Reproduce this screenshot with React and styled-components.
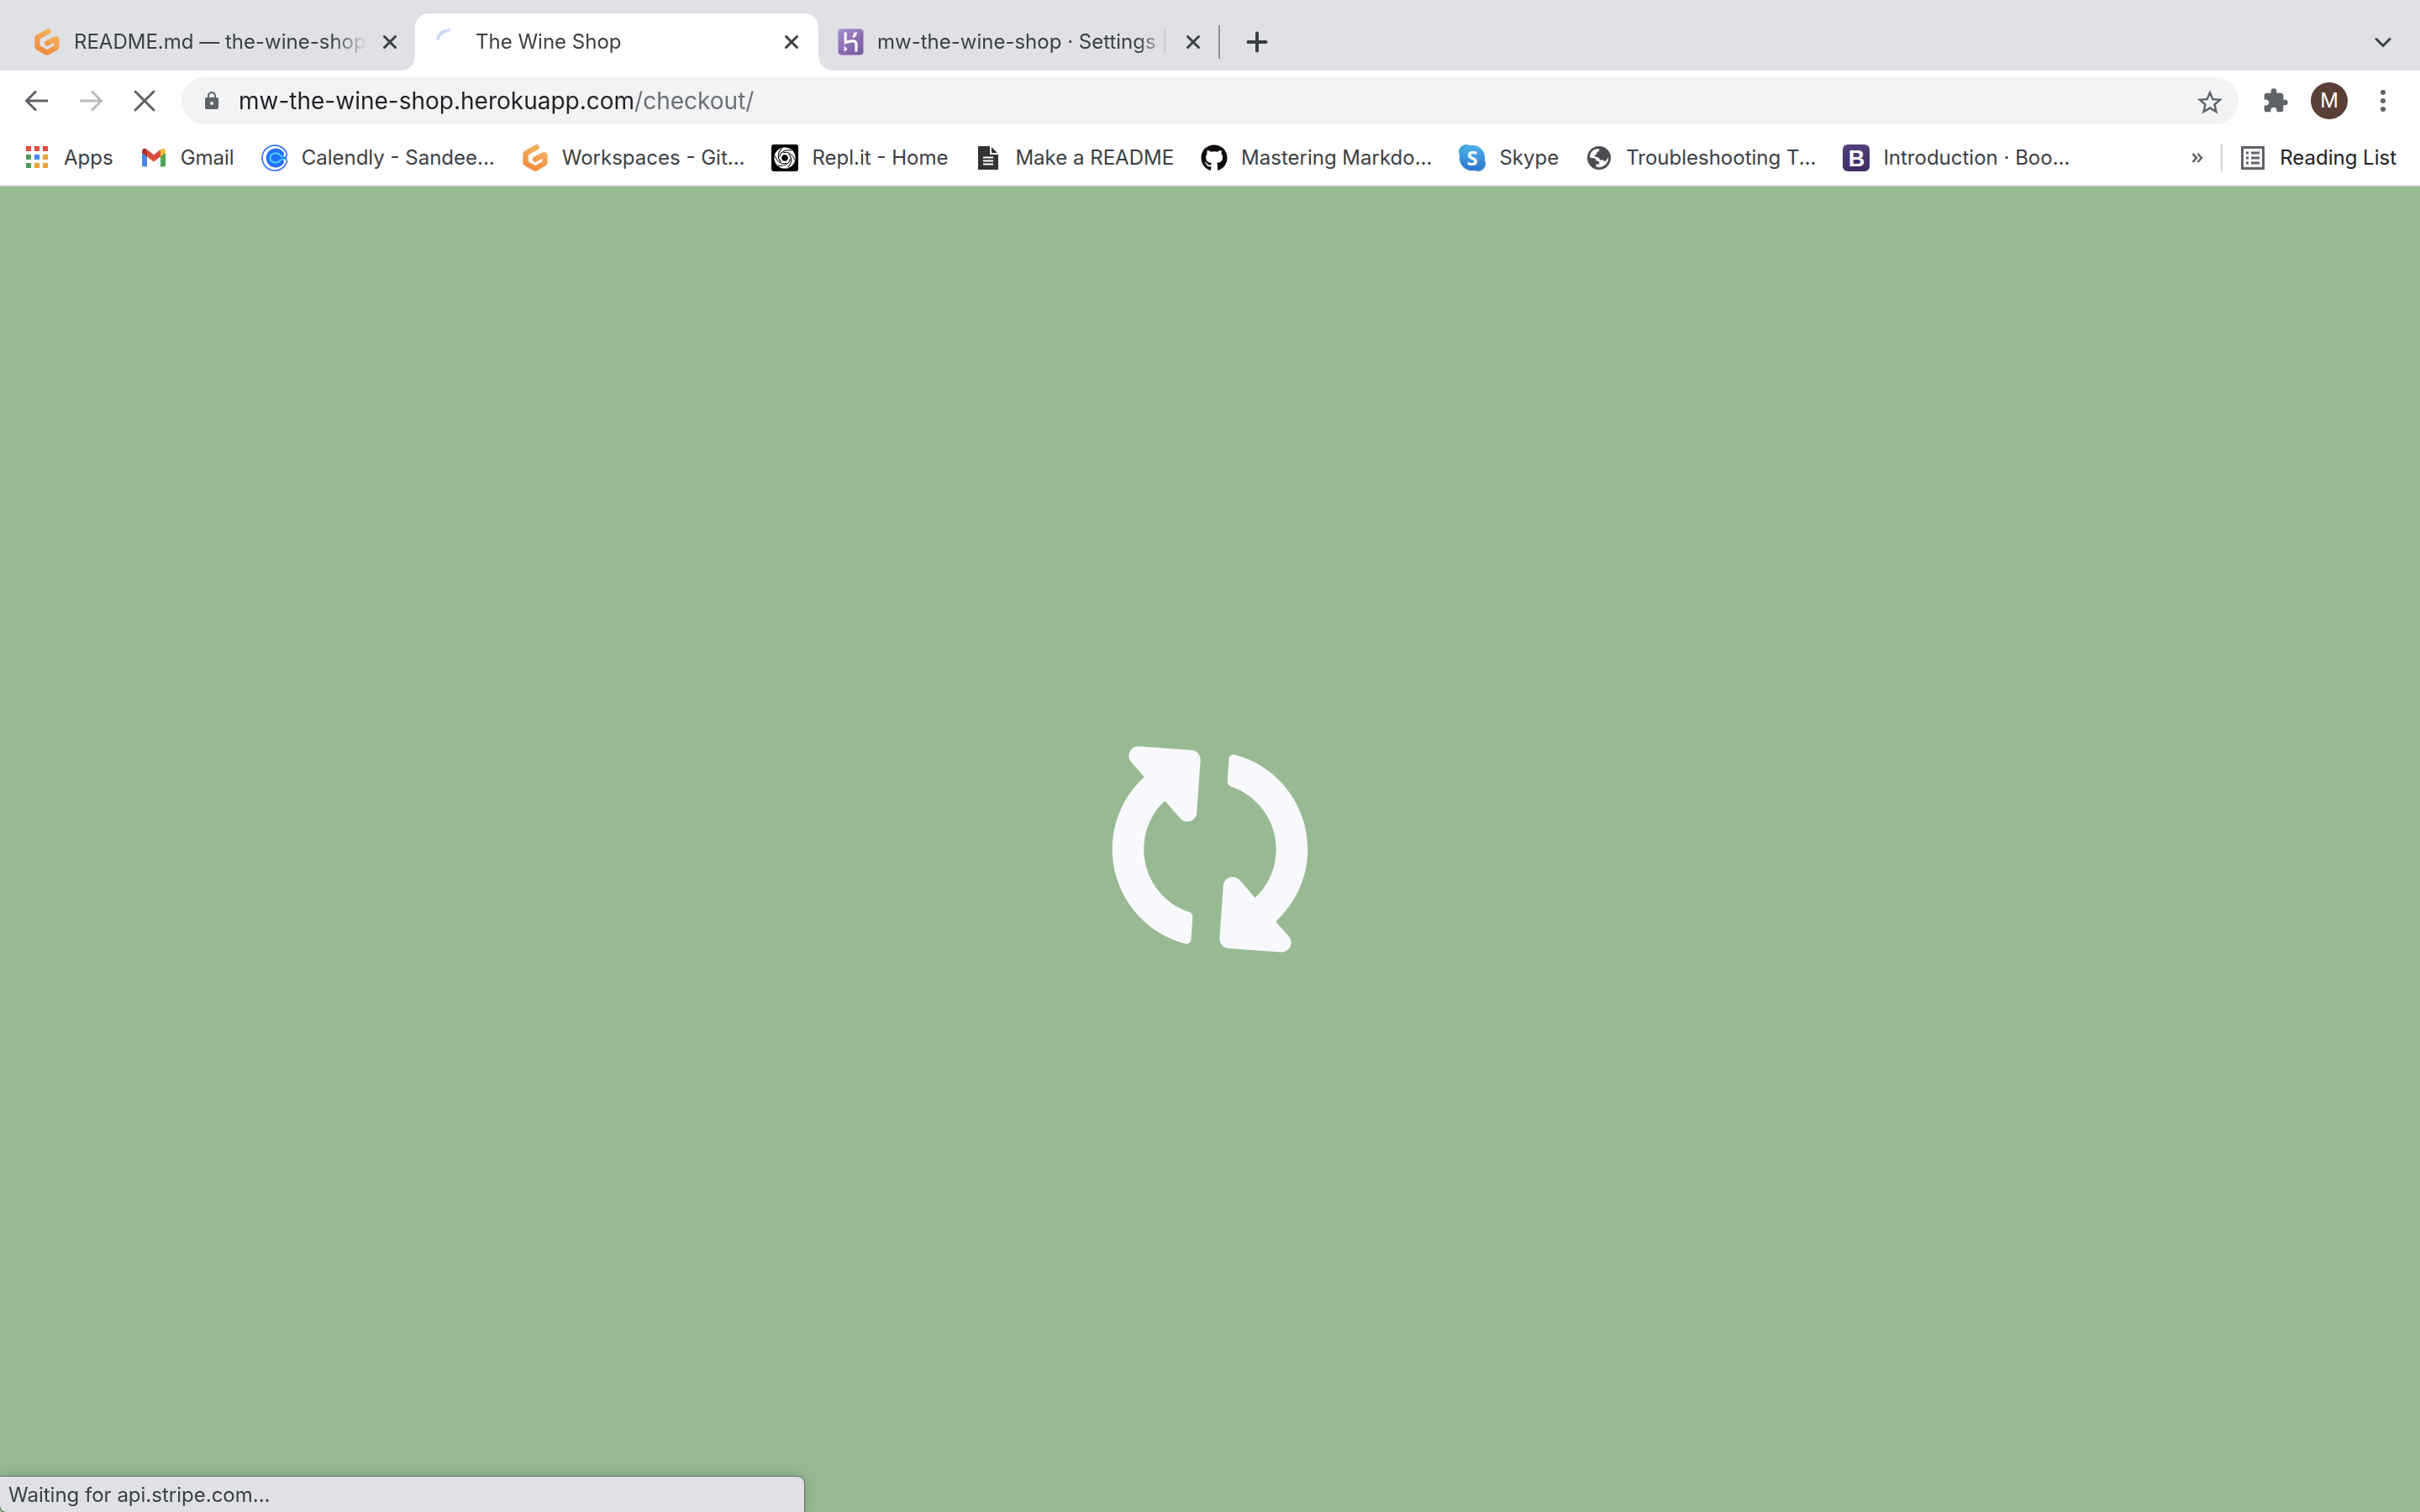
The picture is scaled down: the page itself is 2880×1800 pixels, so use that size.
import React from "react";
import styled, { createGlobalStyle, css } from "styled-components";
import { FaGithub, FaSyncAlt } from "react-icons/fa";
import { MdExtension, MdStarBorder, MdLock } from "react-icons/md";

const GlobalStyle = createGlobalStyle`
  *, *::before, *::after { box-sizing: border-box; }
  body {
    margin: 0;
    font-family: Inter, "Liberation Sans", sans-serif;
    font-size: 24px;
    line-height: 32px;
    color: #3c4043;
    background: #fff;
  }
  button, input {
    font: inherit;
    color: inherit;
    border: 0;
    padding: 0;
    margin: 0;
    background: none;
  }
  button { cursor: pointer; }
  svg { display: block; flex: none; }
`;

const Browser = styled.div`
  min-height: 100vh;
  display: flex;
  flex-direction: column;
`;

/* Tab strip */

const TabStrip = styled.header`
  display: flex;
  align-items: flex-end;
  height: 84px;
  padding: 16px 28px 0 16px;
  background: #dfe1e5;
`;

const Tab = styled.div`
  flex: 0 1 478px;
  min-width: 0;
  height: 68px;
  display: flex;
  align-items: center;
  gap: 16px;
  padding: 0 18px 0 24px;
  ${(p) =>
    p.$active &&
    css`
      flex-basis: 480px;
      margin-right: -2px;
      padding-right: 20px;
      position: relative;
      background: #fff;
      border-radius: 16px 16px 0 0;
      &::before,
      &::after {
        content: "";
        position: absolute;
        bottom: 0;
        width: 16px;
        height: 16px;
      }
      &::before {
        right: 100%;
        background: radial-gradient(circle at 0 0, transparent 15px, #fff 16px);
      }
      &::after {
        left: 100%;
        background: radial-gradient(circle at 100% 0, transparent 15px, #fff 16px);
      }
    `}
`;

const TabTitle = styled.button`
  flex: 1;
  min-width: 0;
  overflow: hidden;
  white-space: nowrap;
  text-align: left;
  mask-image: linear-gradient(to left, transparent, #000 40px);
`;

const IconButton = styled.button`
  flex: none;
  display: grid;
  place-items: center;
  width: ${(p) => p.$size || 32}px;
  height: ${(p) => p.$size || 32}px;
  color: ${(p) => p.$color || "#5f6368"};
`;

const StripDivider = styled.span`
  width: 2px;
  height: 40px;
  margin: 0 28px 14px 0;
  background: #8e9196;
`;

const StripActions = styled.div`
  flex: 1;
  height: 68px;
  display: flex;
  align-items: center;
  justify-content: space-between;
`;

/* Toolbar */

const Toolbar = styled.div`
  display: flex;
  align-items: center;
  gap: 32px;
  height: 72px;
  padding: 0 28px;
`;

const Omnibox = styled.form`
  flex: 1;
  min-width: 0;
  height: 56px;
  display: flex;
  align-items: center;
  gap: 16px;
  margin: 0 -4px;
  padding: 0 20px;
  border-radius: 28px;
  background: #f1f3f4;
  color: #5f6368;
`;

const Address = styled.input`
  flex: 1;
  min-width: 0;
  height: 40px;
  outline: 0;
  font-size: 28px;
  color: transparent;
  background: linear-gradient(to right, #202124 469px, #6b6e72 469px);
  background-clip: text;
  -webkit-background-clip: text;
`;

const Avatar = styled.button`
  flex: none;
  width: 44px;
  height: 44px;
  margin: 0 -6px;
  border-radius: 50%;
  background: #5a3f37;
  color: #fff;
  text-align: center;
`;

/* Bookmarks */

const BookmarkBar = styled.nav`
  display: flex;
  align-items: center;
  height: 66px;
  padding: 0 28px;
  border-bottom: 2px solid #d9dbdd;
`;

const BookmarkList = styled.div`
  flex: 1;
  min-width: 0;
  display: flex;
  gap: 32px;
  overflow: hidden;
`;

const Bookmark = styled.a`
  flex: none;
  display: flex;
  align-items: center;
  gap: 16px;
  color: ${(p) => (p.$strong ? "#202124" : "#3c4043")};
  text-decoration: none;
  white-space: nowrap;
`;

const BarDivider = styled.span`
  width: 2px;
  height: 32px;
  margin: 0 20px 0 12px;
  background: #cfd1d4;
`;

/* Page */

const Page = styled.main`
  flex: 1;
  display: grid;
  place-items: center;
  background: #99b993;
  color: #f8f9fc;
`;

const Loader = styled(FaSyncAlt)`
  width: 240px;
  height: 240px;
  transform: rotate(-86deg);
`;

const StatusBubble = styled.div`
  position: fixed;
  left: 0;
  bottom: 0;
  width: 957px;
  max-width: 100%;
  height: 42px;
  padding: 6px 10px 4px;
  border-radius: 0 8px 0 8px;
  background: #dfe1e5;
  box-shadow: 0 0 0 1px rgba(60, 80, 60, 0.6), 0 0 20px rgba(0, 0, 0, 0.2);
`;

/* Drawings */

const Glyph = ({ children, size = 32 }) => (
  <svg width={size} height={size} viewBox={`0 0 ${size} ${size}`} fill="none" aria-hidden="true">
    {children}
  </svg>
);

const CloseGlyph = () => (
  <Glyph size={24}>
    <path d="M5.5 5.5 18.5 18.5M18.5 5.5 5.5 18.5" stroke="currentColor" strokeWidth="3" strokeLinecap="round" />
  </Glyph>
);

const GitpodIcon = () => (
  <Glyph>
    <defs>
      <linearGradient id="gitpod" x1="24" y1="2" x2="8" y2="30" gradientUnits="userSpaceOnUse">
        <stop stopColor="#f3b565" />
        <stop offset="1" stopColor="#f08a3a" />
      </linearGradient>
    </defs>
    <path
      d="M17.6 3.3 6 9.8Q4.5 10.7 4.5 12.4V20.4Q4.5 22 6 22.9L14.6 28Q16 28.8 17.4 28L26 22.9Q27.5 22 27.5 20.4V13.4Q27.5 11.6 25.8 12.4L16 17.6"
      stroke="url(#gitpod)"
      strokeWidth="6.4"
      strokeLinecap="round"
      strokeLinejoin="round"
    />
  </Glyph>
);

const SpinnerIcon = () => (
  <Glyph>
    <path d="M3 12A14 14 0 0 1 16 2" stroke="#cddcf9" strokeWidth="4" strokeLinecap="round" />
  </Glyph>
);

const HerokuIcon = () => (
  <Glyph>
    <defs>
      <linearGradient id="heroku" x1="4" y1="0" x2="28" y2="32" gradientUnits="userSpaceOnUse">
        <stop stopColor="#a78bc9" />
        <stop offset="1" stopColor="#74579f" />
      </linearGradient>
    </defs>
    <rect x="1.5" y="0.5" width="30" height="31" rx="4" fill="url(#heroku)" stroke="#b6a3d3" />
    <path d="M10.2 4.5V16.6Q23 12.4 23 18.5V27.5" stroke="#fff" strokeWidth="3.2" />
    <path d="M8.6 20.6 12.6 24.2 8.6 27.8ZM20.4 4.5H24.2Q23.4 8 21.2 10.6H17.8Q20 8 20.4 4.5Z" fill="#fff" />
  </Glyph>
);

const AppsIcon = () => {
  const colors = ["#e54b3c", "#e54b3c", "#e54b3c", "#4f9a5b", "#3f8cf3", "#e8a33a", "#4f9a5b", "#e8a33a", "#e8a33a"];
  return (
    <Glyph>
      {colors.map((c, i) => (
        <rect key={i} x={3 + (i % 3) * 10} y={2 + Math.floor(i / 3) * 10} width="6" height="6" fill={c} />
      ))}
    </Glyph>
  );
};

const GmailIcon = () => (
  <Glyph>
    <path d="M2 9 8 13.5V26.5H4Q2 26.5 2 24.5Z" fill="#4c86ec" />
    <path d="M30 9 24 13.5V26.5H28Q30 26.5 30 24.5Z" fill="#54a455" />
    <path d="M24 7.5V14.4L30 10V8.2C30 4.8 26.6 4 24.6 5.6Z" fill="#f2bd42" />
    <path d="M8 7.4V14.4L2 10V8.2C2 4.8 5.4 4 7.4 5.6Z" fill="#b0322a" />
    <path d="M8 6V14.4L16 20.6 24 14.4V6L16 12.2Z" fill="#da4f40" />
  </Glyph>
);

const CalendlyIcon = () => (
  <Glyph>
    <path d="M29.6 9.6A15 15 0 1 0 29.6 22.4" stroke="#2c6df5" strokeWidth="1.6" />
    <path d="M29.6 9.6Q31.8 12.6 28.6 14.8M29.6 22.4Q31.8 19.4 28.6 17.2" stroke="#2c6df5" strokeWidth="1.6" />
    <path d="M27 10.4A11.4 11.4 0 1 0 27 21.6L26 17V15Z" fill="#2170fa" />
    <path
      d="M29 14.6Q26 16.4 23 13.4Q20.6 10.6 18 10.6H16.4Q10.6 11.2 10.6 16T16.4 21.4H18Q20.6 21.4 23 18.6Q26 15.6 29 17.4"
      stroke="#4fd0ef"
      strokeWidth="2"
    />
    <path d="M24 15.1H30V16.9H24Z" fill="#2170fa" />
  </Glyph>
);

const ReplitIcon = () => (
  <Glyph>
    <rect width="32" height="32" rx="3" fill="#000" />
    <circle cx="16" cy="16" r="8.2" stroke="#fff" strokeWidth="8.8" />
    {[0, 60, 120, 180, 240, 300].map((a) => (
      <path
        key={a}
        d="M14 9.8C19.5 8 25.5 11 27.6 18.5"
        stroke="#000"
        strokeWidth="1"
        transform={`rotate(${a} 16 16)`}
      />
    ))}
  </Glyph>
);

const DocumentIcon = () => (
  <Glyph>
    <path d="M4 2H18V12H28V30H4Z" fill="#333" />
    <path d="M20 3 27 10H20Z" fill="#333" />
    <path d="M10 15.5H22M10 19.5H22M10 23.5H22" stroke="#fff" strokeWidth="2" />
  </Glyph>
);

const SkypeIcon = () => (
  <Glyph>
    <defs>
      <linearGradient id="skype" x1="16" y1="0" x2="16" y2="32" gradientUnits="userSpaceOnUse">
        <stop stopColor="#4fb4ea" />
        <stop offset="1" stopColor="#2c72cf" />
      </linearGradient>
    </defs>
    <circle cx="9" cy="9" r="9" fill="#3d9fd8" />
    <circle cx="23" cy="23" r="9" fill="#3585d0" />
    <circle cx="16" cy="16" r="15.2" fill="url(#skype)" />
    <text x="16" y="24.5" textAnchor="middle" fontFamily="Open Sans, sans-serif" fontSize="24" fontWeight="700" fill="#fff">
      S
    </text>
  </Glyph>
);

const GlobeIcon = () => (
  <Glyph>
    <circle cx="16" cy="16" r="14" fill="#4d4e53" />
    <path
      d="M5 15.5C5 9 10 5 15.5 5L16.5 6.5C16.5 9 13 8 13 11C13 12.6 11 12 10.4 14C13.6 15.4 17 15.4 17 18.6H20.6C21 20 22.6 20.2 24 19.4L27.2 15.6C27.2 22.6 21.6 27.2 15.6 27.2L12.4 26.6V23.4H15C17.4 23.4 16.6 20.4 14.6 19.8C11.6 19.6 12.6 16.4 10 16.2Z"
      fill="#fff"
    />
    <path d="M20 6.6C17.6 9.6 19.6 13 22.6 12.6C23.6 12.4 25 13.2 26.4 14.4" stroke="#4d4e53" strokeWidth="3" />
  </Glyph>
);

const BootstrapIcon = () => (
  <Glyph>
    <defs>
      <linearGradient id="bootstrap" x1="16" y1="0" x2="16" y2="32" gradientUnits="userSpaceOnUse">
        <stop stopColor="#533f7c" />
        <stop offset="1" stopColor="#3f2d63" />
      </linearGradient>
    </defs>
    <rect width="32" height="32" rx="6" fill="url(#bootstrap)" />
    <text x="16.5" y="25.5" textAnchor="middle" fontFamily="Liberation Sans, sans-serif" fontSize="27" fontWeight="700" fill="#fff">
      B
    </text>
  </Glyph>
);

const ReadingListIcon = () => (
  <Glyph>
    <rect x="3.5" y="3.5" width="25" height="25" stroke="#5f6368" strokeWidth="3" />
    <path d="M8 10H11M14 10H24M8 16H11M14 16H24M8 22H11M14 22H24" stroke="#5f6368" strokeWidth="3" />
  </Glyph>
);

const ArrowGlyph = ({ flip }) => (
  <Glyph>
    <path
      d={flip ? "M3 16H28M17 4.5 28.5 16 17 27.5" : "M29 16H4M15 4.5 3.5 16 15 27.5"}
      stroke="currentColor"
      strokeWidth="3"
    />
  </Glyph>
);

const tabs = [
  { title: "README.md — the-wine-shop", Icon: GitpodIcon },
  { title: "The Wine Shop", Icon: SpinnerIcon, active: true },
  { title: "mw-the-wine-shop · Settings |", Icon: HerokuIcon },
];

const bookmarks = [
  { label: "Apps", Icon: AppsIcon },
  { label: "Gmail", Icon: GmailIcon },
  { label: "Calendly - Sandee...", Icon: CalendlyIcon },
  { label: "Workspaces - Git...", Icon: GitpodIcon },
  { label: "Repl.it - Home", Icon: ReplitIcon },
  { label: "Make a README", Icon: DocumentIcon },
  { label: "Mastering Markdo...", Icon: () => <FaGithub size={32} color="#0f0b0c" /> },
  { label: "Skype", Icon: SkypeIcon },
  { label: "Troubleshooting T...", Icon: GlobeIcon },
  { label: "Introduction · Boo...", Icon: BootstrapIcon },
];

export default function App() {
  return (
    <Browser>
      <GlobalStyle />
      <TabStrip>
        {tabs.map(({ title, Icon, active }) => (
          <Tab key={title} $active={active}>
            <Icon />
            <TabTitle type="button">{title}</TabTitle>
            <IconButton type="button" $size={24} $color="#3c4043" aria-label={`Close ${title}`}>
              <CloseGlyph />
            </IconButton>
          </Tab>
        ))}
        <StripDivider />
        <StripActions>
          <IconButton type="button" $color="#3c4043" aria-label="New tab">
            <Glyph>
              <path d="M16 5.5V26.5M5.5 16H26.5" stroke="currentColor" strokeWidth="4" strokeLinecap="round" />
            </Glyph>
          </IconButton>
          <IconButton type="button" $color="#3c4043" aria-label="Search tabs">
            <Glyph>
              <path d="M8 12.5 16 20.5 24 12.5" stroke="currentColor" strokeWidth="3" strokeLinecap="round" />
            </Glyph>
          </IconButton>
        </StripActions>
      </TabStrip>

      <Toolbar>
        <IconButton type="button" aria-label="Back">
          <ArrowGlyph />
        </IconButton>
        <IconButton type="button" $color="#babcbe" aria-label="Forward">
          <ArrowGlyph flip />
        </IconButton>
        <IconButton type="button" aria-label="Stop loading">
          <Glyph>
            <path d="M5 5 27 27M27 5 5 27" stroke="currentColor" strokeWidth="3" strokeLinecap="round" />
          </Glyph>
        </IconButton>
        <Omnibox onSubmit={(e) => e.preventDefault()}>
          <IconButton type="button" aria-label="View site information">
            <MdLock size={24} />
          </IconButton>
          <Address aria-label="Address" defaultValue="mw-the-wine-shop.herokuapp.com/checkout/" spellCheck={false} />
          <IconButton type="button" aria-label="Bookmark this tab">
            <MdStarBorder size={36} />
          </IconButton>
        </Omnibox>
        <IconButton type="button" aria-label="Extensions">
          <MdExtension size={32} />
        </IconButton>
        <Avatar type="button" aria-label="Profile M">M</Avatar>
        <IconButton type="button" aria-label="Menu">
          <Glyph>
            <circle cx="16" cy="6" r="3" fill="currentColor" />
            <circle cx="16" cy="16" r="3" fill="currentColor" />
            <circle cx="16" cy="26" r="3" fill="currentColor" />
          </Glyph>
        </IconButton>
      </Toolbar>

      <BookmarkBar aria-label="Bookmarks">
        <BookmarkList>
          {bookmarks.map(({ label, Icon }) => (
            <Bookmark key={label} href="#">
              <Icon />
              {label}
            </Bookmark>
          ))}
        </BookmarkList>
        <IconButton type="button" aria-label="More bookmarks">
          <Glyph>
            <path d="M10.5 11 15 16 10.5 21M16.5 11 21 16 16.5 21" stroke="currentColor" strokeWidth="2.6" />
          </Glyph>
        </IconButton>
        <BarDivider />
        <Bookmark href="#" $strong>
          <ReadingListIcon />
          Reading List
        </Bookmark>
      </BookmarkBar>

      <Page>
        <Loader aria-label="Loading" />
      </Page>
      <StatusBubble role="status">Waiting for api.stripe.com...</StatusBubble>
    </Browser>
  );
}
